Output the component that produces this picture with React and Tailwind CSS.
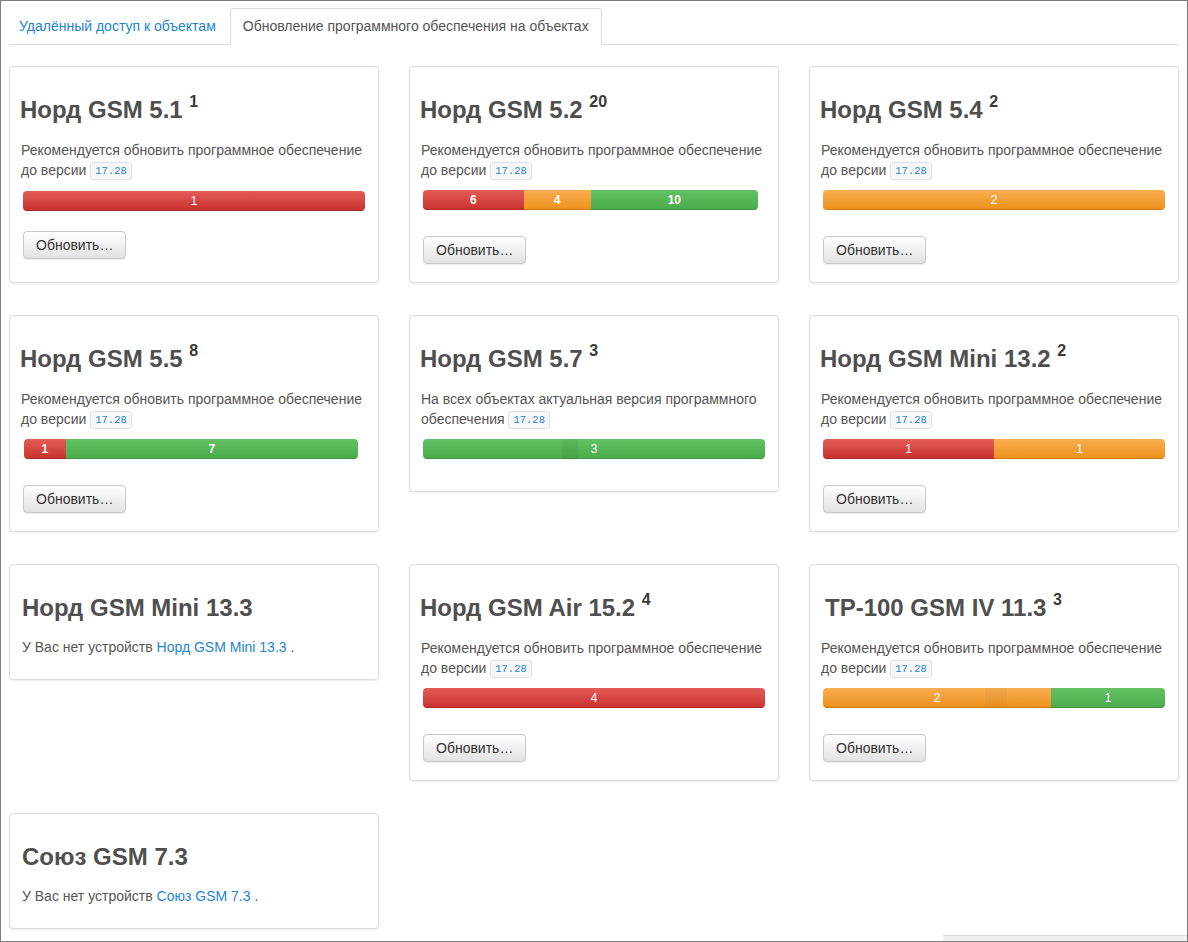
import React from 'react';

const barColors = {
  red: 'bg-gradient-to-b from-[#e35b56] to-[#c9302c]',
  orange: 'bg-gradient-to-b from-[#f9ae4f] to-[#ec9014]',
  green: 'bg-gradient-to-b from-[#63c163] to-[#4aab4a]',
};

const devices = [
  {
    name: 'Норд GSM 5.1',
    count: 1,
    status: 'update',
    bars: [{ n: 1, c: 'red' }],
    first: true,
  },
  {
    name: 'Норд GSM 5.2',
    count: 20,
    status: 'update',
    barWidth: 'w-[98%]',
    bold: true,
    bars: [
      { n: 6, c: 'red' },
      { n: 4, c: 'orange' },
      { n: 10, c: 'green' },
    ],
  },
  {
    name: 'Норд GSM 5.4',
    count: 2,
    status: 'update',
    bars: [{ n: 2, c: 'orange' }],
  },
  {
    name: 'Норд GSM 5.5',
    count: 8,
    status: 'update',
    barWidth: 'w-[97.6%] ml-px',
    bold: true,
    bars: [
      { n: 1, c: 'red' },
      { n: 7, c: 'green' },
    ],
  },
  {
    name: 'Норд GSM 5.7',
    count: 3,
    status: 'ok',
    bars: [{ n: 3, c: 'green' }],
    mark: 'left-[40.6%] w-[4.7%] bg-black/5',
  },
  {
    name: 'Норд GSM Mini 13.2',
    count: 2,
    status: 'update',
    bars: [
      { n: 1, c: 'red' },
      { n: 1, c: 'orange' },
    ],
  },
  { name: 'Норд GSM Mini 13.3', status: 'none' },
  {
    name: 'Норд GSM Air 15.2',
    count: 4,
    status: 'update',
    bars: [{ n: 4, c: 'red' }],
  },
  {
    name: 'ТР-100 GSM IV 11.3',
    count: 3,
    status: 'update',
    titleShift: 'ml-[2px]',
    bars: [
      { n: 2, c: 'orange' },
      { n: 1, c: 'green' },
    ],
    mark: 'left-[47.4%] w-[6.4%] bg-black/[0.03]',
  },
  { name: 'Союз GSM 7.3', status: 'none' },
];

const Version = () => (
  <code className="inline-block align-[1px] rounded-[3px] border border-[#e1e1e8] bg-[#f7f7f9] px-[4px] py-px font-['Liberation_Mono',monospace] text-[10.5px] leading-[14px] text-[#2384d1]">
    17.28
  </code>
);

const Progress = ({ device }) => {
  const total = device.bars.reduce((s, b) => s + b.n, 0);
  return (
    <div
      className={`relative flex h-[20px] overflow-hidden rounded-[4px] ${
        device.barWidth || 'w-full'
      }`}
    >
      {device.bars.map((b, i) => (
        <div
          key={i}
          className={`h-full text-center text-[12px] leading-[20px] text-white shadow-[inset_0_-1px_0_rgba(0,0,0,0.15)] ${
            barColors[b.c]
          } ${device.bold ? 'font-bold' : ''}`}
          style={{ width: `${(b.n / total) * 100}%` }}
        >
          {b.n}
        </div>
      ))}
      {device.mark && <div className={`absolute top-0 h-full ${device.mark}`} />}
    </div>
  );
};

const DeviceCard = ({ device }) => {
  const none = device.status === 'none';
  return (
    <div
      className={`rounded-[4px] border border-[#dddddd] bg-white px-[13px] pt-[30px] shadow-[0_1px_2px_rgba(0,0,0,0.08)] ${
        none ? 'pb-[22px]' : device.status === 'ok' ? 'pb-[32px]' : device.first ? 'pb-[23px]' : 'pb-[18px]'
      }`}
    >
      <h3
        className={`whitespace-nowrap text-[24px] font-bold leading-[26px] text-[#4f4f4f] ${
          device.titleShift || (none ? '-ml-[1px]' : '-ml-[3px]')
        }`}
      >
        {device.name}
        {device.count && (
          <>
            {' '}
            <sup className="-top-[11px] text-[16px] text-[#3a3a3a]">{device.count}</sup>
          </>
        )}
      </h3>

      {none ? (
        <p className="-ml-[1px] mt-[16px] text-[14px] leading-[20px] text-[#555]">
          У Вас нет устройств <a className="text-[#2384d1]">{device.name}</a> .
        </p>
      ) : (
        <>
          <p className="-mx-[2px] mt-[17px] text-[14px] leading-[20px] text-[#555]">
            {device.status === 'ok'
              ? 'На всех объектах актуальная версия программного обеспечения'
              : 'Рекомендуется обновить программное обеспечение до версии'}{' '}
            <Version />
          </p>
          <div className={device.first ? 'mt-[11px]' : 'mt-[10px]'}>
            <Progress device={device} />
          </div>
          {device.status === 'update' && (
            <button
              className={`${
                device.first ? 'mt-[20px]' : 'mt-[26px]'
              } block rounded-[4px] border border-[#c8c8c8] bg-gradient-to-b from-white to-[#e2e2e2] px-[12px] py-[3px] text-[14px] leading-[20px] text-[#333] shadow-[0_1px_1px_rgba(0,0,0,0.075)]`}
            >
              Обновить…
            </button>
          )}
        </>
      )}
    </div>
  );
};

export default function App() {
  return (
    <div className="flex h-[942px] flex-col border border-[#7c7c7c] bg-white font-['Liberation_Sans',Arial,sans-serif]">
      <div className="px-[8px] pt-[7px]">
        <ul className="flex border-b border-[#dddddd]">
          <li className="-mb-px mr-[2px]">
            <a className="block rounded-t-[4px] border border-transparent pb-[8px] pl-[9px] pr-[11px] pt-[7px] text-[14px] leading-[20px] text-[#2384d1]">
              Удалённый доступ к объектам
            </a>
          </li>
          <li className="-mb-px">
            <a className="block rounded-t-[4px] border border-[#dddddd] border-b-white bg-white px-[12px] pb-[8px] pt-[7px] text-[14px] leading-[20px] text-[#555]">
              Обновление программного обеспечения на объектах
            </a>
          </li>
        </ul>

        <div className="mt-[21px] grid grid-cols-3 items-start gap-x-[30px] gap-y-[32px]">
          {devices.map((d) => (
            <DeviceCard key={d.name} device={d} />
          ))}
        </div>
      </div>

      <div className="mt-auto flex justify-end">
        <div className="h-[6px] w-[244px] border-t border-[#d9d9d9] bg-[#f0f0f0]" />
      </div>
    </div>
  );
}
